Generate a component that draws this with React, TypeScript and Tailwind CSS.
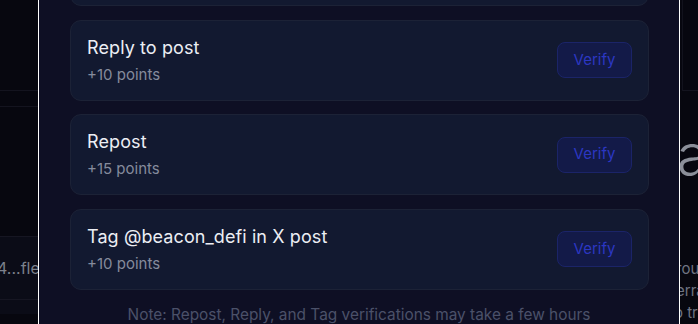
const tasks = [
  { title: "Follow @beacon_defi", points: "+5 points" },
  { title: "Reply to post", points: "+10 points" },
  { title: "Repost", points: "+15 points" },
  { title: "Tag @beacon_defi in X post", points: "+10 points" },
];

const font = { fontFamily: "Inter, 'Noto Sans', sans-serif" };

export default function App() {
  return (
    <div className="relative w-[698px] h-[324px] overflow-hidden bg-[#07070f]" style={font}>
      {/* page behind the modal */}
      <div className="flex h-full">
        <div className="w-[38px] shrink-0 flex flex-col">
          <div className="h-[91px] border-b border-[#14141f]" />
          <div className="h-[16px] border-b border-[#14141f]" />
          <div className="h-[130px] border-b border-[#161622]" />
          <div className="h-[63px] bg-[#0b0c17] border-b border-[#161622] flex items-center text-[16px] text-[#7c818c] whitespace-nowrap">
            <span className="-ml-[3px]">4...fle</span>
          </div>
          <div className="h-[14px] bg-[#0b0c17]" />
        </div>
        <div className="w-[642px] shrink-0" />
        <div className="w-[18px] shrink-0 flex flex-col">
          <div className="h-[91px] border-b border-[#14141f] border-l border-l-[#12121c] ml-[2px]" />
          <div className="h-[36px]" />
          <div className="text-[56px] leading-[56px] text-[#8b8f99] font-light -ml-[3px]">a</div>
          <div className="flex-1" />
          <div className="text-[15px] leading-[22px] text-[#6f7482] whitespace-nowrap -ml-[4px]">
            <div>rou</div>
            <div>erra</div>
            <div className="-ml-[2px]">o tr</div>
          </div>
        </div>
      </div>

      {/* modal */}
      <div className="absolute top-0 left-[38px] w-[642px] h-[324px] bg-[#0e0f24] border-x border-white">
        <div className="flex flex-col gap-[13.5px] pl-[31px] pr-[30px] -mt-[75px]">
          {tasks.map((t) => (
            <div
              key={t.title}
              className="h-[81px] flex items-center justify-between rounded-[11px] border border-[#1c2236] bg-[#121930] px-4"
            >
              <div className="flex flex-col">
                <div className="text-[18px] leading-[24px] font-normal tracking-[0.1px] text-[#eceef4]">{t.title}</div>
                <div className="mt-[5px] text-[15px] leading-[20px] text-[#858b9c]">{t.points}</div>
              </div>
              <button className="w-[75px] h-[36px] rounded-[8px] border border-[#1b2468] bg-[#131a48] text-[15px] text-[#2c37c2]">
                Verify
              </button>
            </div>
          ))}
        </div>
        <p className="mt-[15px] text-center text-[15.4px] leading-[20px] text-[#4b5169]">
          Note: Repost, Reply, and Tag verifications may take a few hours
        </p>
      </div>
    </div>
  );
}
